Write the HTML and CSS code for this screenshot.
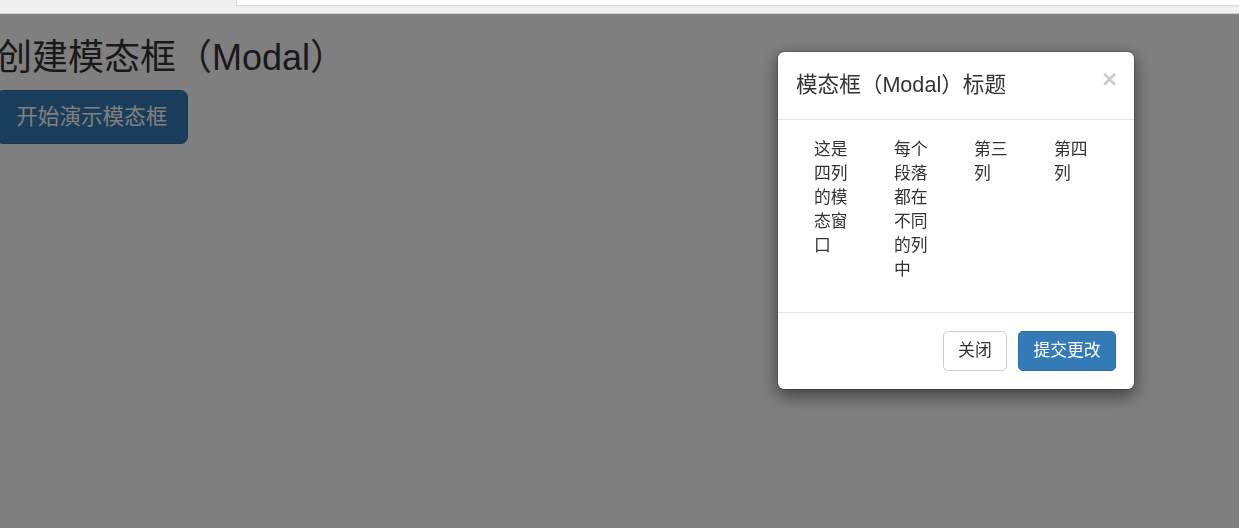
FILE: index.html
```html
<!DOCTYPE html>
<html lang="zh-CN">
<head>
<meta charset="utf-8">
<title>Bootstrap 模态框（Modal）</title>
<link rel="stylesheet" href="styles.css">
</head>
<body>
<div class="topbar"><div class="addr"></div></div>
<main class="page">
  <h2 class="page-title">创建模态框（Modal）</h2>
  <button class="btn btn-primary btn-lg" type="button">开始演示模态框</button>
</main>
<div class="backdrop"></div>
<div class="modal">
  <div class="modal-content">
    <div class="modal-header">
      <button class="close" type="button">&times;</button>
      <h4 class="modal-title">模态框（Modal）标题</h4>
    </div>
    <div class="modal-body">
      <div class="cols">
        <div class="col"><p>这是四列的模态窗口</p></div>
        <div class="col"><p>每个段落都在不同的列中</p></div>
        <div class="col"><p>第三列</p></div>
        <div class="col"><p>第四列</p></div>
      </div>
    </div>
    <div class="modal-footer">
      <button class="btn btn-default" type="button">关闭</button>
      <button class="btn btn-primary" type="button">提交更改</button>
    </div>
  </div>
</div>
</body>
</html>
```

FILE: styles.css
```css
html, body {
  margin: 0;
  padding: 0;
  height: 100%;
  overflow: hidden;
  background: #fff;
}
body {
  font-family: "Liberation Sans", "Noto Sans CJK SC", sans-serif;
  font-size: 16.8px;
  line-height: 24px;
  color: #333;
}
.topbar {
  height: 13px;
  background: #f0f0f0;
  border-bottom: 1px solid #d2d2d2;
}
.addr {
  margin-left: 236px;
  height: 5px;
  background: #fff;
  border-left: 1px solid #d6d6d6;
  border-bottom: 1px solid #d6d6d6;
}
.page {
  margin-left: -4px;
  padding-top: 24px;
}
.page-title {
  margin: 0 0 12px;
  font-size: 36px;
  line-height: 39.6px;
  font-weight: 400;
  color: #333;
}
.btn {
  display: inline-block;
  margin: 0;
  font-family: inherit;
  font-size: 16.8px;
  line-height: 24px;
  padding: 7.2px 14.4px;
  border: 1px solid transparent;
  border-radius: 4.8px;
  cursor: pointer;
  white-space: nowrap;
}
.btn-lg {
  font-size: 21.6px;
  line-height: 28.8px;
  padding: 12px 19.2px;
  border-radius: 7.2px;
}
.btn-primary {
  color: #fff;
  background: #337ab7;
  border-color: #2e6da4;
}
.btn-default {
  color: #333;
  background: #fff;
  border-color: #ccc;
}
.backdrop {
  position: fixed;
  top: 14px;
  left: 0;
  right: 0;
  bottom: 0;
  background: rgba(0, 0, 0, 0.5);
}
.modal {
  position: fixed;
  top: 51px;
  left: 777px;
  width: 358px;
}
.modal-content {
  background: #fff;
  border: 1px solid rgba(0, 0, 0, 0.2);
  border-radius: 7.2px;
  box-shadow: 0 6px 18px rgba(0, 0, 0, 0.5);
  background-clip: padding-box;
}
.modal-header {
  padding: 18px;
  border-bottom: 1px solid #e5e5e5;
}
.modal-title {
  margin: 0;
  font-size: 21.6px;
  line-height: 30.9px;
  font-weight: 400;
}
.close {
  float: right;
  margin-top: -3px;
  margin-right: -1px;
  padding: 0;
  border: 0;
  background: transparent;
  font-family: "Liberation Sans", sans-serif;
  font-size: 25.2px;
  font-weight: 700;
  line-height: 1;
  color: #000;
  opacity: 0.2;
}
.modal-body {
  padding: 18px;
}
.cols {
  display: grid;
  grid-template-columns: repeat(4, 1fr);
}
.col {
  padding: 0 18px;
}
.col p {
  margin: 0 0 12px;
}
.modal-footer {
  padding: 18px;
  border-top: 1px solid #e5e5e5;
  display: flex;
  justify-content: flex-end;
  gap: 11px;
}
```
